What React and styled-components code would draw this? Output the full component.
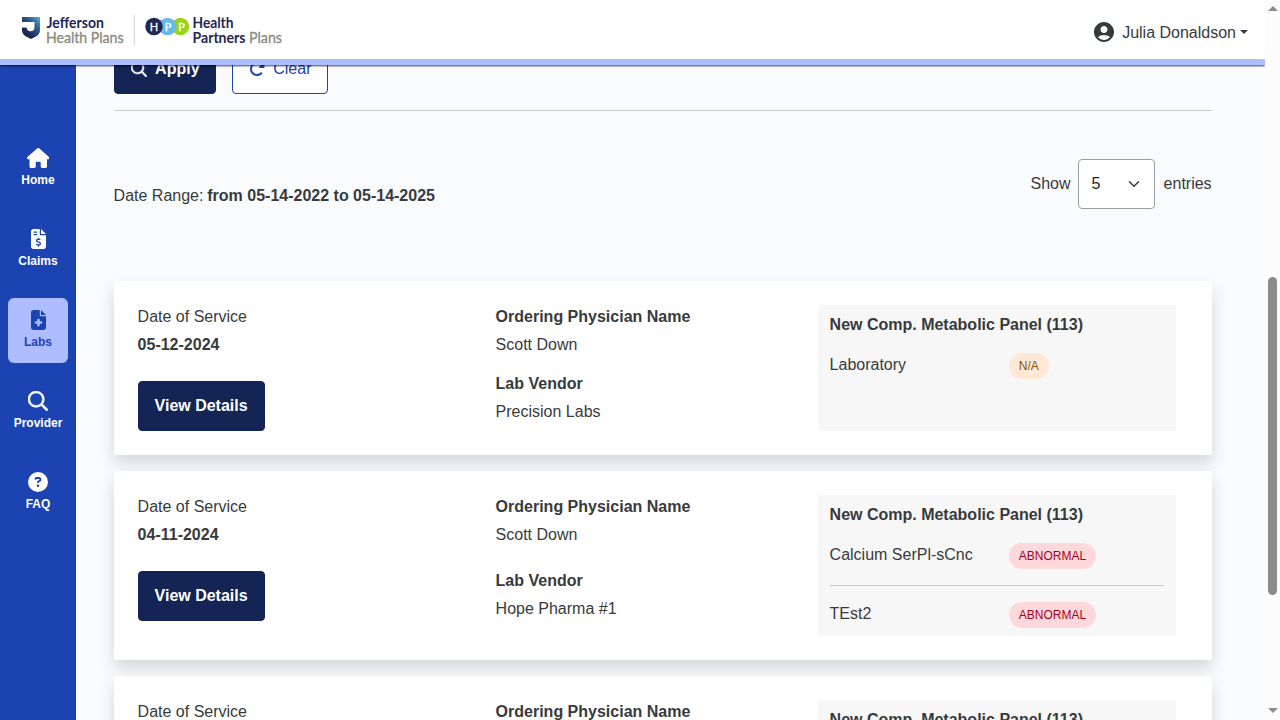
import React from "react";
import styled, { createGlobalStyle } from "styled-components";
import { FaHouse, FaFileInvoiceDollar, FaFileMedical, FaCircleQuestion, FaRotateRight } from "react-icons/fa6";
import { MdAccountCircle } from "react-icons/md";

const Global = createGlobalStyle`
  * { box-sizing: border-box; }
  body {
    margin: 0;
    overflow: hidden;
    background: #fafbfd;
    color: #373a3c;
    font: 400 16px/24px "Liberation Sans", Arial, sans-serif;
  }
`;

const Frame = styled.div`
  display: flex;
  height: 720px;
  overflow: hidden;
`;
const Page = styled.div`
  display: flex;
  flex-direction: column;
  flex: 1;
  min-width: 0;
  overflow: hidden;
`;
const Header = styled.header`
  display: flex;
  align-items: center;
  justify-content: space-between;
  flex: none;
  height: 65px;
  padding: 0 17px 0 20px;
  background: #fff;
  border-bottom: 6px solid #adbdff;
  box-shadow: 0 1px 2px rgba(0, 0, 0, 0.75);
  position: relative;
  z-index: 2;
`;
const UserMenu = styled.div`
  display: flex;
  align-items: center;
  height: 24px;
  margin-top: 5px;
  svg { margin-right: 6px; }
  span { padding-top: 2px; }
`;
const Caret = styled.i`
  margin-left: 4px;
  border: 4.8px solid transparent;
  border-top-color: #373a3c;
  border-bottom: 0;
`;
const Body = styled.div`
  display: flex;
  flex: 1;
  min-height: 0;
`;
const Sidebar = styled.nav`
  display: flex;
  flex-direction: column;
  align-items: center;
  gap: 16px;
  flex: none;
  width: 76px;
  padding-top: 71px;
  background: #1c43b2;
`;
const NavItem = styled.a`
  display: flex;
  flex-direction: column;
  align-items: center;
  gap: 3px;
  width: 60px;
  height: 65px;
  padding-top: 12px;
  border-radius: 6px;
  background: ${(p) => (p.$active ? "#adbdff" : "transparent")};
  color: ${(p) => (p.$active ? "#1c43b2" : "#fff")};
  font-size: 12px;
  font-weight: 700;
  line-height: 18px;
  svg {
    flex: none;
    width: ${(p) => p.$iconWidth}px;
    height: 20px;
    margin-left: ${(p) => (p.$iconWidth === 15 ? 1 : 0)}px;
  }
`;
const Main = styled.main`
  flex: 1;
  min-width: 0;
  overflow: hidden;
  padding: 0 53.4px 0 37.6px;
`;
const Actions = styled.div`
  display: flex;
  gap: 16px;
  margin-top: -21px;
  padding-bottom: 16px;
  border-bottom: 1px solid #c6c8ca;
`;
const Button = styled.button`
  display: flex;
  align-items: center;
  justify-content: center;
  gap: 8px;
  width: ${(p) => p.$width}px;
  height: 50px;
  padding: 0 0 0 ${(p) => p.$nudge || 0}px;
  border: 1px solid ${(p) => (p.$outline ? "#1c43b2" : "#142454")};
  border-radius: 4px;
  background: ${(p) => (p.$outline ? "#fff" : "#142454")};
  color: ${(p) => (p.$outline ? "#1c43b2" : "#fff")};
  font: ${(p) => (p.$outline ? 400 : 700)} 16px/24px "Liberation Sans", Arial, sans-serif;
`;
const Summary = styled.div`
  display: flex;
  justify-content: space-between;
  align-items: flex-start;
  height: 170px;
  padding-top: 48px;
`;
const Range = styled.div`
  padding-top: 25px;
  b { margin-left: -0.6px; }
`;
const Entries = styled.div`
  display: flex;
  align-items: center;
`;
const Select = styled.div`
  display: flex;
  align-items: center;
  justify-content: space-between;
  width: 77px;
  height: 50px;
  margin: 0 8.5px 0 7.5px;
  padding: 0 14px 0 12.5px;
  border: 1px solid #9b9da0;
  border-radius: 4px;
  background: #fff;
  color: #212529;
`;
const Cards = styled.div`
  display: flex;
  flex-direction: column;
  gap: 16px;
`;
const Card = styled.article`
  display: grid;
  grid-template-columns: 358px 322.4px 358px;
  padding: 24px;
  border-radius: 2px;
  background: #fff;
  box-shadow: 0 8px 16px rgba(0, 0, 0, 0.15);
`;
const Service = styled.div`
  display: flex;
  flex-direction: column;
  align-items: flex-start;
  gap: 24px;
`;
const Field = styled.div`
  display: flex;
  flex-direction: column;
  gap: 4px;
`;
const Provider = styled.div`
  display: grid;
  grid-template-rows: 1fr 1fr;
  gap: 7.8px;
`;
const Panel = styled.section`
  padding: 8px 12px 8px 11.6px;
  background: #f7f7f7;
`;
const PanelTitle = styled.div`
  margin-bottom: 16px;
  font-weight: 700;
`;
const Result = styled.div`
  display: grid;
  grid-template-columns: 179.2px 1fr;
  height: 26px;
  & + & {
    height: 43px;
    margin-top: 16px;
    padding-top: 16px;
    border-top: 1px solid #c6c8ca;
  }
`;
const Badge = styled.span`
  justify-self: start;
  height: 26px;
  padding: 0 10px;
  border-radius: 13px;
  background: ${(p) => (p.$abnormal ? "#ffd8db" : "#ffe8d6")};
  color: ${(p) => (p.$abnormal ? "#a8001c" : "#7d5700")};
  font-size: 12px;
  line-height: 26px;
`;
const Scrollbar = styled.div`
  display: flex;
  flex-direction: column;
  align-items: center;
  flex: none;
  width: 15px;
  padding: 6px 0 7px;
  background: #fcfcfc;
`;
const Arrow = styled.span`
  border: 5px solid transparent;
  ${(p) => (p.$up ? "border-top: 0; border-bottom: 5px solid #8b8b8b;" : "border-bottom: 0; border-top: 5px solid #8b8b8b; margin-top: auto;")}
`;
const Thumb = styled.div`
  width: 9px;
  height: 318px;
  margin-top: 266px;
  border-radius: 5px;
  background: #8b8b8b;
`;

const SearchIcon = () => (
  <svg width="16" height="16" viewBox="0 0 512 512" fill="currentColor" stroke="currentColor" strokeWidth="14">
    <path d="M508.5 468.9L387.1 347.5c-2.3-2.3-5.3-3.5-8.5-3.5h-13.2c31.5-36.5 50.6-84 50.6-136C416 93.1 322.9 0 208 0S0 93.1 0 208s93.1 208 208 208c52 0 99.5-19.1 136-50.6v13.2c0 3.2 1.3 6.2 3.5 8.5l121.4 121.4c4.7 4.7 12.3 4.7 17 0l22.6-22.6c4.7-4.7 4.7-12.3 0-17zM208 368c-88.4 0-160-71.6-160-160S119.6 48 208 48s160 71.6 160 160-71.6 160-160 160z" />
  </svg>
);

const Logo = () => (
  <svg width="266" height="40" viewBox="20 10 266 40" fontFamily="Lato, sans-serif" fontSize="14.4">
    <defs>
      <linearGradient id="shield" x1="1" y1="0" x2="0.35" y2="0.75">
        <stop offset="0" stopColor="#62acd8" />
        <stop offset="0.5" stopColor="#2d5b8b" />
        <stop offset="1" stopColor="#1c2857" />
      </linearGradient>
    </defs>
    <path d="M22 17H40V30Q40 34 36 36.5L31 39L26 36.5Q22 34 22 30V27.5H26.5Q27.3 31.3 30.3 31.3Q34.5 31.3 34.5 27V22H22Z" fill="url(#shield)" />
    <circle cx="38.7" cy="37" r="0.6" fill="#b8babd" />
    <g fill="#1f2855" fontWeight="700">
      <text x="46.5" y="27.5" textLength="57.5" lengthAdjust="spacingAndGlyphs">Jefferson</text>
      <text x="192.5" y="27.5" textLength="41" lengthAdjust="spacingAndGlyphs">Health</text>
      <text x="192.5" y="43" textLength="53" lengthAdjust="spacingAndGlyphs">Partners</text>
    </g>
    <g fill="#8b8d83" stroke="#8b8d83" strokeWidth="0.35">
      <text x="46" y="43" textLength="77.5" lengthAdjust="spacingAndGlyphs">Health Plans</text>
      <text x="249" y="43" textLength="33" lengthAdjust="spacingAndGlyphs">Plans</text>
    </g>
    <path d="M134.3 15V45" stroke="#d5d5d7" strokeWidth="1.2" />
    <circle cx="180.5" cy="26.5" r="8.7" fill="#98d41d" />
    <circle cx="167.5" cy="26.5" r="8.7" fill="#67b9e8" />
    <circle cx="154" cy="26.5" r="8.7" fill="#1f2855" />
    <circle cx="188.3" cy="34" r="0.6" fill="#b8babd" />
    <g fill="#fff" stroke="#fff" strokeWidth="0.3" fontSize="11" textAnchor="middle">
      <text x="154" y="30.5">H</text>
      <text x="168" y="30.5">P</text>
      <text x="181.5" y="30.5">P</text>
    </g>
  </svg>
);

const nav = [
  { label: "Home", Icon: FaHouse, width: 22.5 },
  { label: "Claims", Icon: FaFileInvoiceDollar, width: 15 },
  { label: "Labs", Icon: FaFileMedical, width: 15, active: true },
  { label: "Provider", Icon: SearchIcon, width: 20 },
  { label: "FAQ", Icon: FaCircleQuestion, width: 20 },
];

const labs = [
  { date: "05-12-2024", vendor: "Precision Labs", results: [["Laboratory", "N/A"]] },
  { date: "04-11-2024", vendor: "Hope Pharma #1", results: [["Calcium SerPl-sCnc", "ABNORMAL"], ["TEst2", "ABNORMAL"]] },
  { date: "04-11-2024", vendor: "Hope Pharma #1", results: [["Laboratory", "N/A"]] },
];

const LabCard = ({ lab }) => (
  <Card>
    <Service>
      <Field>
        <span>Date of Service</span>
        <b>{lab.date}</b>
      </Field>
      <Button $width={127}>View Details</Button>
    </Service>
    <Provider>
      <Field>
        <b>Ordering Physician Name</b>
        <span>Scott Down</span>
      </Field>
      <Field>
        <b>Lab Vendor</b>
        <span>{lab.vendor}</span>
      </Field>
    </Provider>
    <Panel>
      <PanelTitle>New Comp. Metabolic Panel (113)</PanelTitle>
      {lab.results.map(([name, status]) => (
        <Result key={name}>
          <span>{name}</span>
          <Badge $abnormal={status === "ABNORMAL"}>{status}</Badge>
        </Result>
      ))}
    </Panel>
  </Card>
);

export default function App() {
  return (
    <Frame>
      <Global />
      <Page>
        <Header>
          <Logo />
          <UserMenu>
            <MdAccountCircle size={24} />
            <span>Julia Donaldson</span>
            <Caret />
          </UserMenu>
        </Header>
        <Body>
          <Sidebar>
            {nav.map(({ label, Icon, width, active }) => (
              <NavItem key={label} $active={active} $iconWidth={width}>
                <Icon />
                {label}
              </NavItem>
            ))}
          </Sidebar>
          <Main>
            <Actions>
              <Button $width={102} $nudge={1.5}>
                <SearchIcon />
                Apply
              </Button>
              <Button $width={96} $nudge={1.5} $outline>
                <FaRotateRight size={16} />
                Clear
              </Button>
            </Actions>
            <Summary>
              <Range>
                Date Range: <b>from 05-14-2022 to 05-14-2025</b>
              </Range>
              <Entries>
                Show
                <Select>
                  5
                  <svg width="12" height="12" viewBox="0 0 16 16" fill="none" stroke="#343a40" strokeWidth="2" strokeLinecap="round" strokeLinejoin="round">
                    <path d="m2 5 6 6 6-6" />
                  </svg>
                </Select>
                entries
              </Entries>
            </Summary>
            <Cards>
              {labs.map((lab, i) => (
                <LabCard key={i} lab={lab} />
              ))}
            </Cards>
          </Main>
        </Body>
      </Page>
      <Scrollbar>
        <Arrow $up />
        <Thumb />
        <Arrow />
      </Scrollbar>
    </Frame>
  );
}
